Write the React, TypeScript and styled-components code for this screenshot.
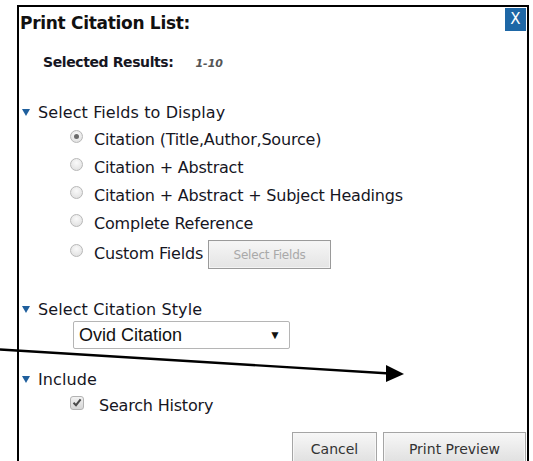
import React from 'react'
import styled, { createGlobalStyle } from 'styled-components'

const GlobalStyle = createGlobalStyle`
  html, body {
    margin: 0;
    padding: 0;
    background: #fff;
    overflow: hidden;
  }
  body {
    font-family: "DejaVu Sans", Verdana, sans-serif;
    color: #16161f;
  }
`

const Page = styled.div`
  width: 533px;
  height: 461px;
  padding: 5px 0 0 17px;
  box-sizing: border-box;
  overflow: hidden;
`

const Dialog = styled.section`
  width: 512px;
  height: 470px;
  box-sizing: border-box;
  border: 2px solid #000;
  border-bottom: none;
  background: #fff;
  display: flex;
  flex-direction: column;
`

const TitleBar = styled.header`
  display: flex;
  justify-content: space-between;
  align-items: flex-start;
  height: 38px;
  padding: 1px 1px 0 1px;
`

const Title = styled.h1`
  margin: 5px 0 0 0;
  font-size: 17px;
  font-weight: bold;
  letter-spacing: -0.3px;
  color: #111;
`

const CloseButton = styled.button`
  width: 21px;
  height: 23px;
  border: none;
  padding: 0;
  background: #1e67a6;
  color: #fff;
  font-family: "DejaVu Sans", sans-serif;
  font-size: 15px;
  line-height: 23px;
  cursor: pointer;
`

const Body = styled.div`
  padding-left: 3px;
`

const Summary = styled.div`
  display: flex;
  align-items: baseline;
  gap: 22px;
  padding-left: 21px;
  margin-top: 8px;
  height: 22px;
  font-size: 14px;
  font-weight: 600;
  letter-spacing: -0.4px;
`

const Range = styled.span`
  font-size: 11px;
  font-style: italic;
  color: #555;
  letter-spacing: 0;
`

const SectionHeader = styled.div<{ $top: number }>`
  display: flex;
  align-items: center;
  gap: 8px;
  margin-top: ${p => p.$top}px;
  height: 20px;
  font-size: 16px;
  letter-spacing: 0.1px;
`

const Caret = styled.span`
  width: 0;
  height: 0;
  border-left: 4px solid transparent;
  border-right: 4px solid transparent;
  border-top: 7px solid #1f5f9d;
  margin-top: 1px;
`

const OptionList = styled.div<{ $top: number }>`
  display: flex;
  flex-direction: column;
  padding-left: 48px;
  margin-top: ${p => p.$top}px;
`

const Option = styled.label<{ $height?: number }>`
  display: flex;
  align-items: center;
  gap: 11px;
  height: ${p => p.$height ?? 28}px;
  font-size: 16px;
  letter-spacing: -0.2px;
`

const Radio = styled.span<{ $checked?: boolean }>`
  width: 13px;
  height: 13px;
  border-radius: 50%;
  box-sizing: border-box;
  border: 1px solid #b8b8b8;
  background: radial-gradient(circle at 50% 35%, #fafafa 0%, #dcdcdc 100%);
  margin-bottom: 6px;
  display: flex;
  align-items: center;
  justify-content: center;
  flex-shrink: 0;
  &::after {
    content: '';
    width: 5px;
    height: 5px;
    border-radius: 50%;
    background: ${p => (p.$checked ? '#6a6a6a' : 'transparent')};
  }
`

const GhostButton = styled.button`
  margin: 3px 0 0 -6px;
  width: 123px;
  height: 29px;
  border: 1px solid #9a9a9a;
  box-shadow: inset 0 0 0 1px #f4f4f4;
  background: linear-gradient(#f6f6f6, #e4e4e4);
  color: #a9a9a9;
  font-family: "DejaVu Sans", sans-serif;
  font-size: 12px;
  letter-spacing: -0.2px;
`

const Select = styled.div`
  margin: 2px 0 0 51px;
  width: 217px;
  height: 28px;
  box-sizing: border-box;
  border: 1px solid #b5b5b5;
  border-radius: 2px;
  display: flex;
  align-items: center;
  justify-content: space-between;
  padding: 0 8px 0 5px;
  font-family: "Liberation Sans", Arial, sans-serif;
  font-size: 18px;
  color: #111;
`

const SelectArrow = styled.span`
  font-size: 12px;
`

const Check = styled.span`
  width: 14px;
  height: 14px;
  box-sizing: border-box;
  border: 1px solid #b3b3b3;
  border-radius: 3px;
  background: linear-gradient(#f2f2f2, #d6d6d6);
  display: flex;
  align-items: center;
  justify-content: center;
  margin-bottom: 5px;
  margin-right: 4px;
`

const Footer = styled.div`
  display: flex;
  justify-content: flex-end;
  gap: 6px;
  margin-top: 13px;
  padding-right: 1px;
`

const ActionButton = styled.button<{ $width: number }>`
  width: ${p => p.$width}px;
  height: 34px;
  border: 1px solid #a5a5a5;
  box-shadow: inset 0 0 0 1px #f7f7f7;
  background: linear-gradient(#f7f7f7, #dedede);
  color: #333;
  font-family: "DejaVu Sans", sans-serif;
  font-size: 14px;
  letter-spacing: 0;
  padding: 0 0 1px 0;
`

const Annotation = styled.svg`
  position: absolute;
  left: 0;
  top: 0;
  pointer-events: none;
`

const fields = [
  'Citation (Title,Author,Source)',
  'Citation + Abstract',
  'Citation + Abstract + Subject Headings',
  'Complete Reference'
]

function App () {
  return (
    <>
      <GlobalStyle />
      <Page>
        <Dialog>
          <TitleBar>
            <Title>Print Citation List:</Title>
            <CloseButton>X</CloseButton>
          </TitleBar>
          <Body>
            <Summary>
              <span>Selected Results:</span>
              <Range>1-10</Range>
            </Summary>

            <SectionHeader $top={26}>
              <Caret />
              Select Fields to Display
            </SectionHeader>
            <OptionList $top={3}>
              {fields.map((f, i) => (
                <Option key={f}>
                  <Radio $checked={i === 0} />
                  {f}
                </Option>
              ))}
              <Option $height={32}>
                <Radio />
                Custom Fields
                <GhostButton disabled>Select Fields</GhostButton>
              </Option>
            </OptionList>

            <SectionHeader $top={30}>
              <Caret />
              Select Citation Style
            </SectionHeader>
            <Select>
              Ovid Citation
              <SelectArrow>▼</SelectArrow>
            </Select>

            <SectionHeader $top={20}>
              <Caret />
              Include
            </SectionHeader>
            <OptionList $top={2}>
              <Option>
                <Check>
                  <svg width='10' height='9' viewBox='0 0 10 9'>
                    <path d='M1.5 4.8 L4 7.2 L8.6 1.4' fill='none' stroke='#4a4a4a' strokeWidth='2' />
                  </svg>
                </Check>
                Search History
              </Option>
            </OptionList>

            <Footer>
              <ActionButton $width={85}>Cancel</ActionButton>
              <ActionButton $width={143}>Print Preview</ActionButton>
            </Footer>
          </Body>
        </Dialog>
      </Page>
      <Annotation width='533' height='461' viewBox='0 0 533 461'>
        <line x1='0' y1='349.5' x2='390' y2='373.5' stroke='#000' strokeWidth='2.4' />
        <polygon points='386,365 404,374 386,382' fill='#000' />
      </Annotation>
    </>
  )
}

export default App
